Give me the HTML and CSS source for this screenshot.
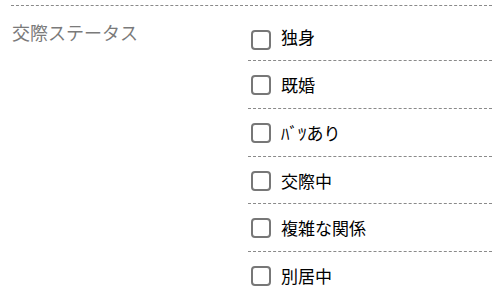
FILE: index.html
```html
<!DOCTYPE html>
<html lang="ja">
<head>
<meta charset="utf-8">
<link rel="stylesheet" href="styles.css">
</head>
<body>
<div class="field">
  <div class="field-label">交際ステータス</div>
  <ul class="options">
    <li class="option first"><span class="box"></span><span class="text">独身</span></li>
    <li class="option"><span class="box"></span><span class="text">既婚</span></li>
    <li class="option"><span class="box"></span><span class="text">ﾊﾞﾂあり</span></li>
    <li class="option"><span class="box"></span><span class="text">交際中</span></li>
    <li class="option"><span class="box"></span><span class="text">複雑な関係</span></li>
    <li class="option last"><span class="box"></span><span class="text">別居中</span></li>
  </ul>
</div>
</body>
</html>
```
FILE: styles.css
```css
html, body {
  margin: 0;
  padding: 0;
  background: #fff;
}
body {
  font-family: "Noto Sans CJK JP", "Noto Sans", sans-serif;
  width: 500px;
  height: 301px;
  overflow: hidden;
}
.field {
  margin: 5px 8px 0 11px;
  border-top: 1px dashed #8a8a8a;
  display: flex;
}
.field-label {
  width: 236px;
  padding: 13px 0 0 1px;
  font-size: 18px;
  line-height: 26px;
  color: #7a7a7a;
}
.options {
  flex: 1;
  list-style: none;
  margin: 0;
  padding: 0;
}
.option {
  box-sizing: border-box;
  height: 47.75px;
  padding: 14px 0 0 3px;
  border-bottom: 1px dashed #8a8a8a;
  display: flex;
  align-items: flex-start;
  gap: 10px;
}
.option.first {
  height: 55px;
  padding-top: 24px;
}
.option.first .text {
  margin-top: -3px;
}
.option.last {
  border-bottom: none;
}
.box {
  box-sizing: border-box;
  width: 20px;
  height: 20px;
  border: 2px solid #777;
  border-radius: 4px;
  flex: none;
}
.text {
  font-size: 17px;
  line-height: 20px;
  color: #000;
}
```
